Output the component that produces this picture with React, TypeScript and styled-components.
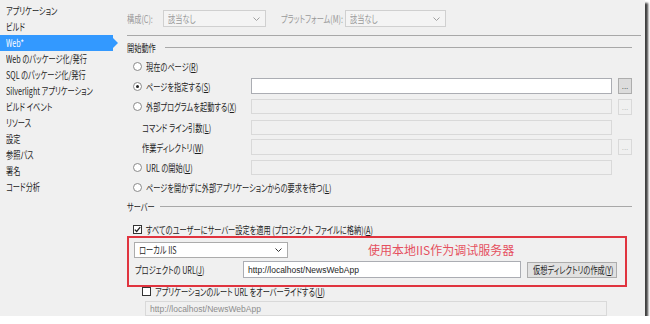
import React from "react";
import styled, { createGlobalStyle } from "styled-components";

const GlobalStyle = createGlobalStyle`
  html, body {
    margin: 0;
    padding: 0;
    background: #ffffff;
  }
  body {
    font-family: "Noto Sans CJK JP", "Noto Sans", sans-serif;
    font-feature-settings: "palt";
    color: #1e1e1e;
  }
  u {
    text-underline-offset: 1px;
  }
`;

// the reference uses a narrow UI face; squeeze Noto CJK to the same widths
const Txt = styled.span`
  display: inline-block;
  white-space: nowrap;
  transform: scaleX(0.72);
  transform-origin: 0 50%;
`;

const Frame = styled.div`
  display: flex;
  width: 645px;
  height: 316px;
  background: #f0f0f0;
  box-shadow: 3px 3px 2px rgba(0, 0, 0, 0.75);
  overflow: hidden;
`;

const Sidebar = styled.div`
  width: 113px;
  flex-shrink: 0;
  padding-top: 3px;
  display: flex;
  flex-direction: column;
`;

const NavItem = styled.div<{ $active?: boolean }>`
  position: relative;
  height: 16px;
  line-height: 16px;
  padding-left: 6px;
  font-size: 10px;
  background: ${(p) => (p.$active ? "#3399ff" : "transparent")};
  color: ${(p) => (p.$active ? "#ffffff" : "#1e1e1e")};

  &::after {
    content: "";
    display: ${(p) => (p.$active ? "block" : "none")};
    position: absolute;
    right: -5px;
    top: 3px;
    border-top: 5px solid transparent;
    border-bottom: 5px solid transparent;
    border-left: 5px solid #3399ff;
  }
`;

const Content = styled.div`
  flex: 1;
  padding: 10px 4px 0 14px;
  font-size: 10px;
  white-space: nowrap;
`;

const TopBar = styled.div`
  display: flex;
  align-items: center;
  height: 17px;
`;

const DimLabel = styled.span<{ $width: number }>`
  width: ${(p) => p.$width}px;
  flex-shrink: 0;
  color: #9a9a9a;
`;

const Combo = styled.div<{ $width: number; $disabled?: boolean }>`
  box-sizing: border-box;
  width: ${(p) => p.$width}px;
  height: ${(p) => (p.$disabled ? 17 : 16)}px;
  display: flex;
  align-items: center;
  justify-content: space-between;
  padding: 0 5px 0 4px;
  border: 1px solid ${(p) => (p.$disabled ? "#d0d0d0" : "#acacac")};
  background: ${(p) => (p.$disabled ? "#f4f4f4" : "#ffffff")};
  color: ${(p) => (p.$disabled ? "#9a9a9a" : "#1e1e1e")};
`;

const Spacer = styled.div<{ $width: number }>`
  width: ${(p) => p.$width}px;
  flex-shrink: 0;
`;

const Separator = styled.div`
  height: 1px;
  background: #a8a8a8;
  margin-top: 8px;
`;

const GroupHeader = styled.div<{ $top: number }>`
  display: flex;
  align-items: center;
  height: 12px;
  margin-top: ${(p) => p.$top}px;
  margin-right: 9px;

  &::after {
    content: "";
    flex: 1;
    height: 1px;
    background: #a8a8a8;
  }
`;

const GroupTitle = styled.div<{ $width: number }>`
  width: ${(p) => p.$width}px;
  flex-shrink: 0;
`;

const OptionGrid = styled.div`
  display: grid;
  grid-template-columns: 118px 361px 14px;
  grid-auto-rows: 20.3px;
  column-gap: 6px;
  align-items: center;
  margin-top: 3px;
`;

const OptionLabel = styled.div<{ $indent?: boolean; $span?: boolean }>`
  display: flex;
  align-items: center;
  gap: 4px;
  padding-left: ${(p) => (p.$indent ? 15 : 6)}px;
  grid-column: ${(p) => (p.$span ? "1 / 4" : "auto")};
`;

const Radio = styled.span<{ $checked?: boolean }>`
  box-sizing: border-box;
  width: 9px;
  height: 9px;
  border-radius: 50%;
  border: 1px solid #8a8a8a;
  background: #ffffff;
  display: inline-flex;
  align-items: center;
  justify-content: center;
  flex-shrink: 0;

  &::after {
    content: "";
    display: ${(p) => (p.$checked ? "block" : "none")};
    width: 3px;
    height: 3px;
    border-radius: 50%;
    background: #222222;
  }
`;

const Field = styled.div<{ $disabled?: boolean; $width?: number; $height?: number }>`
  box-sizing: border-box;
  width: ${(p) => (p.$width ? `${p.$width}px` : "100%")};
  height: ${(p) => p.$height ?? 15}px;
  display: flex;
  align-items: center;
  padding-left: 4px;
  border: 1px solid ${(p) => (p.$disabled ? "#d9d9d9" : "#abadb3")};
  background: ${(p) => (p.$disabled ? "#f0f0f0" : "#ffffff")};
  color: ${(p) => (p.$disabled ? "#8d8d8d" : "#1e1e1e")};
  font-family: "Liberation Sans", Arial, sans-serif;
  font-size: 8.5px;
`;

const DotsButton = styled.div<{ $disabled?: boolean }>`
  box-sizing: border-box;
  width: 14px;
  height: 16px;
  display: flex;
  align-items: flex-end;
  justify-content: center;
  padding-bottom: 3px;
  border: 1px solid ${(p) => (p.$disabled ? "#d9d9d9" : "#adadad")};
  background: ${(p) => (p.$disabled ? "#f0f0f0" : "#dcdcdc")};
  color: ${(p) => (p.$disabled ? "#b0b0b0" : "#333333")};
  font-family: "Liberation Sans", Arial, sans-serif;
  font-size: 8px;
  line-height: 6px;
`;

const CheckRow = styled.div<{ $indent: number; $top: number; $height: number }>`
  display: flex;
  align-items: center;
  gap: 4px;
  height: ${(p) => p.$height}px;
  margin-top: ${(p) => p.$top}px;
  padding-left: ${(p) => p.$indent}px;
`;

const CheckBox = styled.span`
  box-sizing: border-box;
  width: 9px;
  height: 9px;
  border: 1px solid #333333;
  background: #ffffff;
  display: inline-flex;
  align-items: center;
  justify-content: center;
  flex-shrink: 0;
`;

const Highlight = styled.div`
  box-sizing: border-box;
  width: 500px;
  height: 51px;
  border: 2px solid #e0343f;
  padding: 3px 0 0 5px;
  display: flex;
  flex-direction: column;
  gap: 3px;
`;

const HighlightRow = styled.div`
  display: flex;
  align-items: center;
`;

const Note = styled.span`
  margin-left: 80px;
  font-family: "Noto Sans CJK SC", "Noto Sans", sans-serif;
  font-size: 12px;
  color: #e5505f;
`;

const UrlLabel = styled.span`
  width: 108px;
  flex-shrink: 0;
  padding-left: 1px;
`;

const PushButton = styled.div`
  box-sizing: border-box;
  width: 90px;
  height: 16px;
  margin-left: 6px;
  padding-left: 5px;
  display: flex;
  align-items: center;
  border: 1px solid #adadad;
  background: #e1e1e1;
`;

const OverrideField = styled.div`
  margin: 5px 0 0 18px;
`;

const Chevron = ({ color }: { color: string }) => (
  <svg width="7" height="4" viewBox="0 0 7 4">
    <path d="M0.5 0.5 L3.5 3.5 L6.5 0.5" fill="none" stroke={color} strokeWidth="1" />
  </svg>
);

const Tick = () => (
  <svg width="7" height="7" viewBox="0 0 7 7">
    <path d="M0.8 3.6 L2.7 5.5 L6.2 1.2" fill="none" stroke="#222" strokeWidth="1.3" />
  </svg>
);

const navItems = [
  "アプリケーション",
  "ビルド",
  "Web*",
  "Web のパッケージ化/発行",
  "SQL のパッケージ化/発行",
  "Silverlight アプリケーション",
  "ビルド イベント",
  "リソース",
  "設定",
  "参照パス",
  "署名",
  "コード分析",
];

const App = () => {
  return (
    <>
      <GlobalStyle />
      <Frame>
        <Sidebar>
          {navItems.map((item) => (
            <NavItem key={item} $active={item === "Web*"}>
              <Txt>{item}</Txt>
            </NavItem>
          ))}
        </Sidebar>
        <Content>
          <TopBar>
            <DimLabel $width={36}>
              <Txt>構成(C):</Txt>
            </DimLabel>
            <Combo $width={103} $disabled>
              <Txt>該当なし</Txt>
              <Chevron color="#a0a0a0" />
            </Combo>
            <Spacer $width={15} />
            <DimLabel $width={64}>
              <Txt>プラットフォーム(M):</Txt>
            </DimLabel>
            <Combo $width={101} $disabled>
              <Txt>該当なし</Txt>
              <Chevron color="#a0a0a0" />
            </Combo>
          </TopBar>
          <Separator />

          <GroupHeader $top={5}>
            <GroupTitle $width={38}>
              <Txt>開始動作</Txt>
            </GroupTitle>
          </GroupHeader>
          <OptionGrid>
            <OptionLabel>
              <Radio />
              <Txt>
                現在のページ(<u>R</u>)
              </Txt>
            </OptionLabel>
            <div />
            <div />

            <OptionLabel>
              <Radio $checked />
              <Txt>
                ページを指定する(<u>S</u>)
              </Txt>
            </OptionLabel>
            <Field $height={16} />
            <DotsButton>...</DotsButton>

            <OptionLabel>
              <Radio />
              <Txt>
                外部プログラムを起動する(<u>X</u>)
              </Txt>
            </OptionLabel>
            <Field $disabled />
            <DotsButton $disabled>...</DotsButton>

            <OptionLabel $indent>
              <Txt>
                コマンド ライン引数(<u>L</u>)
              </Txt>
            </OptionLabel>
            <Field $disabled />
            <div />

            <OptionLabel $indent>
              <Txt>
                作業ディレクトリ(<u>W</u>)
              </Txt>
            </OptionLabel>
            <Field $disabled $height={16} />
            <DotsButton $disabled>...</DotsButton>

            <OptionLabel>
              <Radio />
              <Txt>
                URL の開始(<u>U</u>)
              </Txt>
            </OptionLabel>
            <Field $disabled />
            <div />

            <OptionLabel $span>
              <Radio />
              <Txt>
                ページを開かずに外部アプリケーションからの要求を待つ(<u>L</u>)
              </Txt>
            </OptionLabel>
          </OptionGrid>

          <GroupHeader $top={2}>
            <GroupTitle $width={33}>
              <Txt>サーバー</Txt>
            </GroupTitle>
          </GroupHeader>
          <CheckRow $indent={6} $top={10} $height={14}>
            <CheckBox>
              <Tick />
            </CheckBox>
            <Txt>
              すべてのユーザーにサーバー設定を適用 (プロジェクト ファイルに格納)(<u>A</u>)
            </Txt>
          </CheckRow>

          <Highlight>
            <HighlightRow>
              <Combo $width={154}>
                <Txt>ローカル IIS</Txt>
                <Chevron color="#333" />
              </Combo>
              <Note>使用本地IIS作为调试服务器</Note>
            </HighlightRow>
            <HighlightRow>
              <UrlLabel>
                <Txt>
                  プロジェクトの URL(<u>J</u>)
                </Txt>
              </UrlLabel>
              <Field $width={278} $height={17}>
                http://localhost/NewsWebApp
              </Field>
              <PushButton>
                <Txt>
                  仮想ディレクトリの作成(<u>Y</u>)
                </Txt>
              </PushButton>
            </HighlightRow>
          </Highlight>

          <CheckRow $indent={15} $top={0} $height={9}>
            <CheckBox />
            <Txt>
              アプリケーションのルート URL をオーバーライドする(<u>U</u>)
            </Txt>
          </CheckRow>
          <OverrideField>
            <Field $disabled $width={462}>
              http://localhost/NewsWebApp
            </Field>
          </OverrideField>
        </Content>
      </Frame>
    </>
  );
};

export default App;
